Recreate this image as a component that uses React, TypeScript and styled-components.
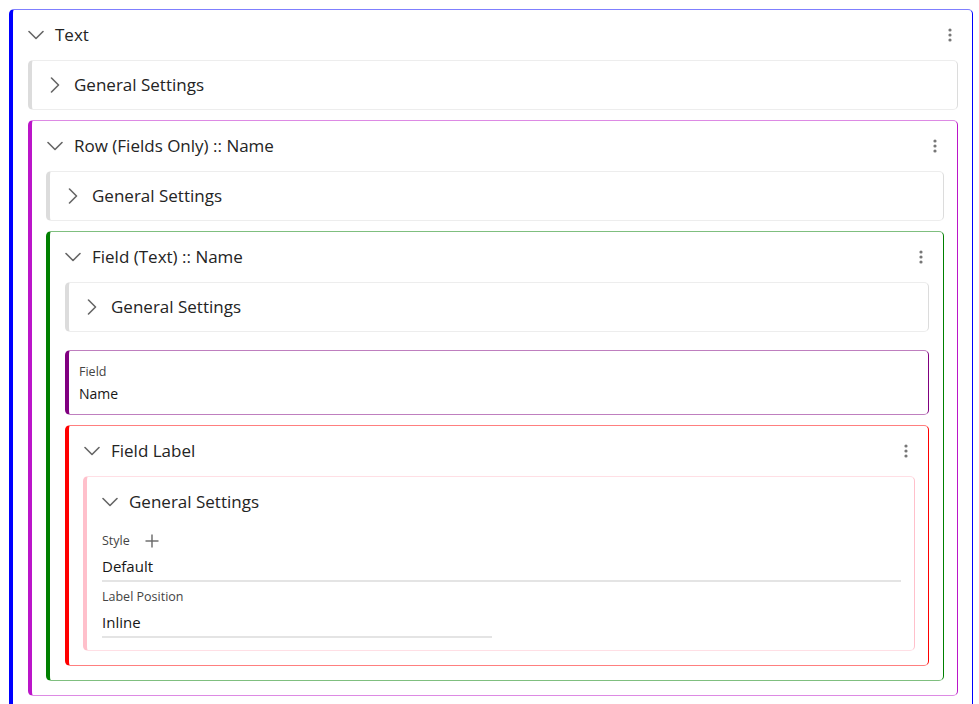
import React from "react";
import styled, { createGlobalStyle } from "styled-components";

const GlobalStyle = createGlobalStyle`
  html, body { margin: 0; padding: 0; background: #ffffff; }
  body {
    font-family: "Open Sans", "Noto Sans", "Liberation Sans", sans-serif;
    color: #222;
    -webkit-font-smoothing: antialiased;
  }
  * { box-sizing: border-box; }
`;

const Page = styled.div`
  padding: 9px 6px 0 9px;
  height: 704px;
  overflow: hidden;
`;

const Panel = styled.section<{ $c: string }>`
  border: 1px solid ${(p) => p.$c}80;
  border-left: 4px solid ${(p) => p.$c};
  border-right-color: ${(p) => p.$c};
  border-radius: 5px;
  background: #fff;
  display: flex;
  flex-direction: column;
`;

const FieldPanel = styled(Panel)`
  margin-top: 8px;
  padding: 13px 10px 10px 10px;
`;

const Header = styled.div<{ $h?: number }>`
  height: ${(p) => p.$h ?? 50}px;
  flex: none;
  display: flex;
  align-items: center;
  gap: 11px;
  padding: 0 12px 0 15px;
`;

const Title = styled.span`
  flex: 1;
  font-size: 17px;
  line-height: 22px;
  color: #242424;
  white-space: nowrap;
`;

const Body = styled.div<{ $narrow?: boolean }>`
  display: flex;
  flex-direction: column;
  gap: 10px;
  padding: ${(p) => (p.$narrow ? "0 13px 14px 14px" : "0 14px 14px 15px")};
`;

const FormBody = styled.div`
  display: flex;
  flex-direction: column;
  gap: 7px;
  padding: 6px 13px 12px 15px;
`;

const IconBox = styled.span`
  width: 16px;
  height: 16px;
  flex: none;
  display: flex;
  align-items: center;
  justify-content: center;
`;

const KebabBox = styled.span`
  width: 20px;
  height: 20px;
  flex: none;
  display: flex;
  align-items: center;
  justify-content: center;
`;

const SmallLabel = styled.div`
  font-size: 12.5px;
  line-height: 16px;
  color: #444;
  display: flex;
  align-items: center;
  gap: 15px;
`;

const Value = styled.div`
  font-size: 15px;
  line-height: 20px;
  color: #161616;
`;

const FieldValue = styled(Value)`
  margin-top: 4px;
  font-size: 14px;
`;

const InputField = styled.div<{ $max?: number }>`
  display: flex;
  flex-direction: column;
  max-width: ${(p) => (p.$max ? `${p.$max}px` : "none")};
`;

const UnderlinedValue = styled(Value)`
  margin-top: 7px;
  padding-bottom: 4px;
  border-bottom: 2px solid #e4e4e4;
`;

const Chevron = ({ open }: { open: boolean }) => (
  <IconBox>
    <svg width="16" height="16" viewBox="0 0 16 16" fill="none">
      <polyline
        points={open ? "1,4.5 8,11.5 15,4.5" : "4.5,1 11.5,8 4.5,15"}
        stroke="#666"
        strokeWidth="1.6"
        strokeLinecap="round"
        strokeLinejoin="round"
      />
    </svg>
  </IconBox>
);

const Kebab = () => (
  <KebabBox>
    <svg width="4" height="14" viewBox="0 0 4 14">
      <circle cx="2" cy="2" r="1.6" fill="#777" />
      <circle cx="2" cy="7" r="1.6" fill="#777" />
      <circle cx="2" cy="12" r="1.6" fill="#777" />
    </svg>
  </KebabBox>
);

const Plus = () => (
  <svg width="14" height="14" viewBox="0 0 14 14">
    <line x1="7" y1="0.5" x2="7" y2="13.5" stroke="#666" strokeWidth="1.4" />
    <line x1="0.5" y1="7" x2="13.5" y2="7" stroke="#666" strokeWidth="1.4" />
  </svg>
);

const Collapsed = ({ title }: { title: string }) => (
  <Panel $c="#dcdcdc">
    <Header $h={48}>
      <Chevron open={false} />
      <Title>{title}</Title>
    </Header>
  </Panel>
);

const Expanded = ({
  title,
  color,
  narrow,
  children,
}: {
  title: string;
  color: string;
  narrow?: boolean;
  children: React.ReactNode;
}) => (
  <Panel $c={color}>
    <Header>
      <Chevron open />
      <Title>{title}</Title>
      <Kebab />
    </Header>
    <Body $narrow={narrow}>{children}</Body>
  </Panel>
);

export default function App() {
  return (
    <>
      <GlobalStyle />
      <Page>
        <Expanded title="Text" color="#0000ff">
          <Collapsed title="General Settings" />
          <Expanded title="Row (Fields Only) :: Name" color="#bb15c9" narrow>
            <Collapsed title="General Settings" />
            <Expanded title="Field (Text) :: Name" color="#008000">
              <Collapsed title="General Settings" />
              <FieldPanel $c="#800080">
                <SmallLabel>Field</SmallLabel>
                <FieldValue>Name</FieldValue>
              </FieldPanel>
              <Expanded title="Field Label" color="#ff0000" narrow>
                <Panel $c="#ffc0cb">
                  <Header>
                    <Chevron open />
                    <Title>General Settings</Title>
                  </Header>
                  <FormBody>
                    <InputField>
                      <SmallLabel>
                        Style
                        <Plus />
                      </SmallLabel>
                      <UnderlinedValue>Default</UnderlinedValue>
                    </InputField>
                    <InputField $max={390}>
                      <SmallLabel>Label Position</SmallLabel>
                      <UnderlinedValue>Inline</UnderlinedValue>
                    </InputField>
                  </FormBody>
                </Panel>
              </Expanded>
            </Expanded>
          </Expanded>
        </Expanded>
      </Page>
    </>
  );
}
